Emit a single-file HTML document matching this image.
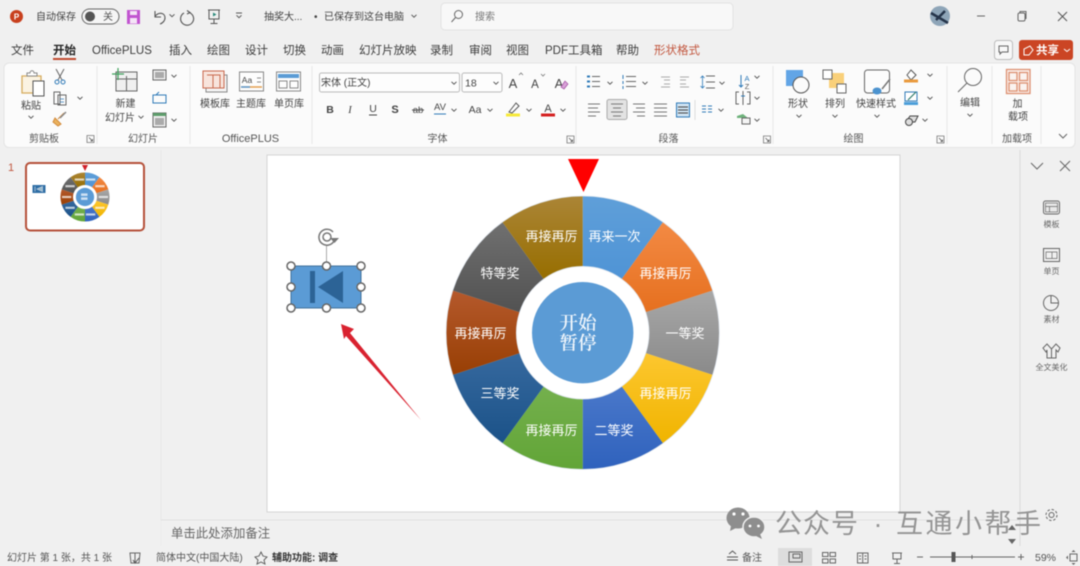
<!DOCTYPE html>
<html lang="zh"><head><meta charset="utf-8"><title>PowerPoint</title>
<style>
html,body{margin:0;padding:0;width:1080px;height:566px;overflow:hidden;background:#f0f0f0}
svg{display:block;filter:blur(.5px)}
text{font-family:"Liberation Sans","Noto Sans CJK SC",sans-serif;fill:#444;font-size:10px}
.m{text-anchor:middle}
.tab{font-size:11.5px;fill:#3c3c3c}
.g{font-size:10px;fill:#555}
.w{fill:#fff;font-size:13px;text-anchor:middle}
.ln{fill:none;stroke:#666;stroke-width:1}
.lb{fill:none;stroke:#2f7ab8;stroke-width:1}
.sf{fill:#f2f7fc;font-size:18.5px;font-weight:600;text-anchor:middle;font-family:"Noto Serif CJK SC",serif}
</style></head><body>
<svg width="1080" height="566" viewBox="0 0 1080 566" xmlns="http://www.w3.org/2000/svg">
<defs>
<path id="c" d="M-2.5,-1.2L0,1.2L2.5,-1.2" fill="none" stroke="#555" stroke-width="1"/>
<g id="l"><path d="M-3.5,-3.5H3.5V3.5H-3.5Z" fill="none" stroke="#777" stroke-width=".8"/><path d="M-1.5,-1.5L2,2M2,0V2H0" fill="none" stroke="#555" stroke-width=".8"/></g>
<linearGradient id="g1" x1="0" y1="0" x2="0" y2="1"><stop offset="0" stop-color="#5f9fd9"/><stop offset="1" stop-color="#4f94d6"/></linearGradient>
<linearGradient id="g2" x1="0" y1="0" x2="0" y2="1"><stop offset="0" stop-color="#f38a44"/><stop offset="1" stop-color="#e6701f"/></linearGradient>
<linearGradient id="g3" x1="0" y1="0" x2="0" y2="1"><stop offset="0" stop-color="#a8a8a8"/><stop offset="1" stop-color="#8a8a8a"/></linearGradient>
<linearGradient id="g4" x1="0" y1="0" x2="0" y2="1"><stop offset="0" stop-color="#fdc72f"/><stop offset="1" stop-color="#f0b400"/></linearGradient>
<linearGradient id="g5" x1="0" y1="0" x2="0" y2="1"><stop offset="0" stop-color="#4a78ca"/><stop offset="1" stop-color="#2f62bd"/></linearGradient>
<linearGradient id="g6" x1="0" y1="0" x2="0" y2="1"><stop offset="0" stop-color="#74b04d"/><stop offset="1" stop-color="#62a537"/></linearGradient>
<linearGradient id="g7" x1="0" y1="0" x2="0" y2="1"><stop offset="0" stop-color="#36699f"/><stop offset="1" stop-color="#1b5288"/></linearGradient>
<linearGradient id="g8" x1="0" y1="0" x2="0" y2="1"><stop offset="0" stop-color="#b5592c"/><stop offset="1" stop-color="#983f04"/></linearGradient>
<linearGradient id="g9" x1="0" y1="0" x2="0" y2="1"><stop offset="0" stop-color="#707070"/><stop offset="1" stop-color="#525252"/></linearGradient>
<linearGradient id="g10" x1="0" y1="0" x2="0" y2="1"><stop offset="0" stop-color="#ab8536"/><stop offset="1" stop-color="#976e00"/></linearGradient>
<g id="wheel">
<path fill="url(#g1)" d="M0,-136.3A136.3,136.3 0 0 1 80.1,-110.3L39.2,-54A66.7,66.7 0 0 0 0,-66.7Z"/>
<path fill="url(#g2)" d="M80.1,-110.3A136.3,136.3 0 0 1 129.6,-42.1L63.4,-20.6A66.7,66.7 0 0 0 39.2,-54Z"/>
<path fill="url(#g3)" d="M129.6,-42.1A136.3,136.3 0 0 1 129.6,42.1L63.4,20.6A66.7,66.7 0 0 0 63.4,-20.6Z"/>
<path fill="url(#g4)" d="M129.6,42.1A136.3,136.3 0 0 1 80.1,110.3L39.2,54A66.7,66.7 0 0 0 63.4,20.6Z"/>
<path fill="url(#g5)" d="M80.1,110.3A136.3,136.3 0 0 1 0,136.3L0,66.7A66.7,66.7 0 0 0 39.2,54Z"/>
<path fill="url(#g6)" d="M0,136.3A136.3,136.3 0 0 1 -80.1,110.3L-39.2,54A66.7,66.7 0 0 0 0,66.7Z"/>
<path fill="url(#g7)" d="M-80.1,110.3A136.3,136.3 0 0 1 -129.6,42.1L-63.4,20.6A66.7,66.7 0 0 0 -39.2,54Z"/>
<path fill="url(#g8)" d="M-129.6,42.1A136.3,136.3 0 0 1 -129.6,-42.1L-63.4,-20.6A66.7,66.7 0 0 0 -63.4,20.6Z"/>
<path fill="url(#g9)" d="M-129.6,-42.1A136.3,136.3 0 0 1 -80.1,-110.3L-39.2,-54A66.7,66.7 0 0 0 -63.4,-20.6Z"/>
<path fill="url(#g10)" d="M-80.1,-110.3A136.3,136.3 0 0 1 0,-136.3L0,-66.7A66.7,66.7 0 0 0 -39.2,-54Z"/>
<circle r="50.7" fill="#5b9bd5"/>
</g>
</defs>

<rect width="1080" height="566" fill="#f0f0f0"/>

<!-- title bar -->
<circle cx="16.5" cy="16.5" r="6.5" fill="#c8401e"/><text x="16.5" y="19.5" class="m" style="fill:#fff;font-size:8px;font-weight:700">P</text>
<text x="36" y="20">自动保存</text>
<rect x="82" y="9" width="37" height="15" rx="7.5" fill="#f6f6f6" stroke="#666"/><circle cx="90" cy="16.5" r="5" fill="#555"/><text x="108" y="20" class="m" style="fill:#555">关</text>
<path d="M127,10H140V24H127Z" fill="#c154d0"/><rect x="130" y="11" width="7" height="4" fill="#f4e4f6"/><rect x="130" y="18" width="7" height="5.5" fill="#f4e4f6"/>
<path d="M155,11V17H161M155,16.5C158,12 165,12 165,18C165,21 162,23.5 160,24" fill="none" stroke="#555" stroke-width="1.1"/><use href="#c" x="172" y="15.5"/>
<path d="M187,10.5L190,12.5L187,14M189,12.5A6.5,6.5 0 1 1 184,13" fill="none" stroke="#555" stroke-width="1.1"/>
<path d="M208,10H220M209,10V19H219V10M214,19V23M210.5,23.5H217.5" fill="none" stroke="#555"/><path d="M213,12.5L216.5,14.5L213,16.5Z" fill="#2b8a7b"/>
<path d="M236,13H242" stroke="#555" fill="none"/><use href="#c" x="239" y="16.5"/>
<text x="264" y="20">抽奖大...</text><text x="314" y="20">•</text><text x="324" y="20">已保存到这台电脑</text><use href="#c" x="414" y="16"/>
<rect x="441" y="3" width="292" height="27" rx="4" fill="#f8f8f8" stroke="#e2e2e2"/>
<circle cx="458.5" cy="14.5" r="4" class="ln"/><path d="M455.5,17.5L451.5,22" class="ln"/><text x="475" y="20" style="fill:#777">搜索</text>
<circle cx="940" cy="16" r="10" fill="#8ea5b8"/><path d="M931,13L943,20L948,23M936,20L945,11" stroke="#25344a" stroke-width="2.5" fill="none"/>
<path d="M977,16H985" stroke="#666" stroke-width="1"/><rect x="1018" y="13" width="7" height="8" rx="1.5" class="ln"/><path d="M1020,13V11.5H1026V18.5H1025" class="ln"/>
<path d="M1058,12L1067,21M1067,12L1058,21" stroke="#555" stroke-width="1" fill="none"/>

<!-- tabs -->
<text x="11" y="54" class="tab">文件</text>
<text x="53" y="54" class="tab" style="font-weight:700;fill:#222">开始</text><rect x="53" y="58" width="23" height="2" fill="#c0492d"/>
<text x="92" y="54" class="tab">OfficePLUS</text>
<text x="169" y="54" class="tab">插入</text><text x="207" y="54" class="tab">绘图</text><text x="245" y="54" class="tab">设计</text><text x="283" y="54" class="tab">切换</text><text x="321" y="54" class="tab">动画</text><text x="359" y="54" class="tab">幻灯片放映</text><text x="430" y="54" class="tab">录制</text><text x="469" y="54" class="tab">审阅</text><text x="506" y="54" class="tab">视图</text><text x="545" y="54" class="tab">PDF工具箱</text><text x="616" y="54" class="tab">帮助</text><text x="654" y="54" class="tab" style="fill:#c2573f">形状格式</text>
<rect x="994.5" y="40.5" width="18" height="19" rx="3" fill="#f8f8f8" stroke="#bbb"/><path d="M999,46H1008V52H1002L1000,54V52H999Z" class="ln"/>
<rect x="1019" y="40" width="54" height="20" rx="3" fill="#cb4524"/><path d="M1024,55V49L1030,46L1033,50L1029,55Z" fill="none" stroke="#fff"/><text x="1036" y="54" style="fill:#fff;font-size:11.5px;font-weight:700">共享</text><path d="M1064,49L1067,51.5L1070,49" fill="none" stroke="#fff"/>

<!-- ribbon -->
<rect x="4" y="63" width="1071" height="84.5" rx="5" fill="#fbfbfb" stroke="#e4e4e4"/>
<path d="M97,66V144M190,66V144M312,66V144M576,66V144M773,66V144M947,66V144M992,66V144M1041,66V144" stroke="#e9e9e9"/>

<!-- clipboard -->
<path d="M22,76H41V93H22Z" fill="#fbf3e2" stroke="#d6ac5e" stroke-width="1.3"/><path d="M27,76V73H30C30,70 34,70 34,73H37V76Z" fill="#fff" stroke="#888"/><rect x="33" y="81" width="11" height="15" fill="#fff" stroke="#555"/>
<text x="31" y="109" class="m">粘贴</text><use href="#c" x="31" y="117"/>
<path d="M56,69L62,80M64,69L58,80" stroke="#666" fill="none"/><circle cx="57" cy="82" r="2" fill="none" stroke="#2f7ab8"/><circle cx="63" cy="82" r="2" fill="none" stroke="#2f7ab8"/>
<path d="M54,92H60V104H54ZM58,95H66V105H58Z" fill="#fbfbfb" stroke="#666"/><path d="M60,99H64M60,102H64" stroke="#2f7ab8" stroke-width=".8"/><use href="#c" x="80" y="98"/>
<path d="M64,113L58,119M55,118L61,124L58,126L53,122Z" stroke="#d28a3a" fill="#eab25f"/><path d="M66,112L60,118" stroke="#888" stroke-width="1.5"/>
<text x="44" y="142" class="m g">剪贴板</text><use href="#l" x="90.5" y="139"/>

<!-- slides -->
<rect x="116" y="72" width="21" height="19" fill="#f0f0f0" stroke="#666"/><path d="M126.5,76V91M116,79H137" stroke="#666"/><path d="M118,68V80M112,74H124" stroke="#3fa05c" stroke-width="1.2"/>
<text x="125.5" y="107" class="m">新建</text><text x="120" y="121" class="m">幻灯片</text><use href="#c" x="141" y="117"/>
<rect x="153" y="70" width="13" height="10" fill="#eee" stroke="#666"/><rect x="155" y="72" width="9" height="6" fill="#aaa"/><use href="#c" x="174" y="76"/>
<path d="M153,95H166V103H153ZM156,95L159,92" class="lb"/>
<rect x="153" y="113" width="13" height="14" fill="#eee" stroke="#666"/><rect x="153" y="113" width="13" height="3" fill="#5d9d6b"/><rect x="155" y="118" width="9" height="7" fill="#aaa"/><use href="#c" x="174" y="120"/>
<text x="143" y="142" class="m g">幻灯片</text>

<!-- officeplus -->
<rect x="206" y="75" width="21" height="17" fill="#f4f4f4" stroke="#888"/><rect x="203" y="71" width="21" height="17" fill="#f8e4dc" stroke="#c9684d"/><path d="M207,75H220V88M213,75V88" stroke="#c9684d" fill="none"/>
<text x="215" y="107" class="m">模板库</text>
<rect x="239.5" y="72" width="24" height="19" fill="#fdfdfd" stroke="#888"/><text x="247" y="83" class="m" style="font-size:8.5px">Aa</text><path d="M257,78H261M257,82H261" stroke="#888"/><path d="M241,87H262" stroke="#e4a04e" stroke-width="1.5"/><path d="M241,87H250" stroke="#5b9bd5" stroke-width="1.5"/>
<text x="251" y="107" class="m">主题库</text>
<rect x="276.5" y="72" width="24" height="19" fill="#fdfdfd" stroke="#888"/><rect x="278" y="74" width="21" height="4" fill="#5b9bd5"/><path d="M279,81H287V88H279ZM290,81H298V88H290Z" stroke="#888" fill="none"/>
<text x="289" y="107" class="m">单页库</text>
<text x="250.5" y="142" class="m g" style="font-size:11px">OfficePLUS</text>

<!-- font -->
<rect x="319.5" y="73" width="140" height="19" rx="2" fill="#fdfdfd" stroke="#bbb"/><text x="321" y="86">宋体 (正文)</text><use href="#c" x="454" y="83"/>
<rect x="462" y="73" width="40" height="19" rx="2" fill="#fdfdfd" stroke="#bbb"/><text x="465" y="86.5" style="font-size:10.5px">18</text><use href="#c" x="496" y="83"/>
<text x="513" y="88" class="m" style="font-size:13px">A</text><path d="M519,75L521,73L523,75" fill="none" stroke="#777" stroke-width=".8"/>
<text x="535" y="88" class="m" style="font-size:11.5px">A</text><path d="M541,74L543,76L545,74" fill="none" stroke="#777" stroke-width=".8"/>
<text x="559" y="88" class="m" style="font-size:13px">A</text><path d="M561,87L565,81L568,84L564,89Z" fill="#d9a0d8" stroke="#a050a0" stroke-width=".7"/>
<text x="330" y="113" class="m" style="font-weight:700;font-size:10.5px">B</text>
<text x="350" y="113" class="m" style="font-style:italic;font-family:'Liberation Serif',serif;font-size:11px">I</text>
<text x="373" y="112" class="m" style="font-size:10.5px">U</text><path d="M369,115H377" stroke="#444"/>
<text x="395" y="113" class="m" style="font-size:11px;font-weight:700">S</text>
<text x="418" y="113" class="m" style="font-size:9.5px">ab</text><path d="M412,110H424" stroke="#555"/>
<text x="440" y="110" class="m" style="font-size:9.5px">AV</text><path d="M434,114H446" stroke="#2f7ab8"/><use href="#c" x="454" y="110"/>
<text x="475" y="113" class="m" style="font-size:10.5px">Aa</text><use href="#c" x="490" y="110"/>
<path d="M509,112L516,103L519,106L512,113Z" fill="#fdfdfd" stroke="#555"/><rect x="506" y="113.5" width="14" height="3" fill="#f7ea3a"/><use href="#c" x="529" y="110"/>
<text x="548" y="112" class="m" style="font-size:11px">A</text><rect x="541" y="113.5" width="14" height="3" fill="#d42020"/><use href="#c" x="563" y="110"/>
<text x="437.5" y="142" class="m g">字体</text><use href="#l" x="570.5" y="139.5"/>

<!-- paragraph -->
<g fill="none" stroke="#666">
<path d="M592,76.5H600M592,81.5H600M592,86.5H600M626,76.5H636M626,81.5H636M626,86.5H636"/>
<path d="M661,77H670M664,80H670M664,84H670M661,87H670" stroke="#aaa"/>
<path d="M680,77H689M680,80H686M680,84H686M680,87H689" stroke="#aaa"/>
<path d="M706,76H715M706,82H715M706,88H715"/>
</g>
<path d="M587,75.500H590V77.500H587ZM587,80.500H590V82.500H587ZM587,85.500H590V87.500H587Z" fill="#2f7ab8"/>
<path d="M623,75V79M623,81V84M623,86V89" stroke="#2f7ab8"/><path d="M702.5,76V88M700.5,78L702.5,76L704.5,78M700.5,86L702.5,88L704.5,86" fill="none" stroke="#2f7ab8" stroke-width=".8"/>
<use href="#c" x="610" y="83"/><use href="#c" x="645" y="83"/><use href="#c" x="722" y="83"/>
<rect x="607" y="99.500" width="20" height="20" rx="2" fill="#e3e3e3" stroke="#aaa"/>
<g fill="none" stroke="#777">
<path d="M588,104H600M588,108H598M588,112H600M588,116H596"/>
<path d="M611,104H623M613,108H621M611,112H623M613,116H621"/>
<path d="M633,104H645M636,108H645M633,112H645M637,116H645"/>
<path d="M654,104H667M654,108H667M654,112H667M654,116H667"/>
</g>
<rect x="676.5" y="103" width="13" height="14" fill="#cfe3f2" stroke="#2f7ab8"/><path d="M678,107H688M678,110H688M678,113H688" stroke="#444"/>
<path d="M695,100V120" stroke="#ddd"/>
<path d="M702,106H706M702,109H706M702,112H706M708,106H712M708,109H712M708,112H712" stroke="#2f7ab8"/><use href="#c" x="721" y="110"/>
<path d="M741,75V87M739,85L741,87L743,85" stroke="#2f7ab8" fill="none"/><text x="747" y="81" class="m" style="font-size:7.5px;fill:#2f7ab8">A</text><text x="747" y="89" class="m" style="font-size:7.5px;fill:#555">Z</text><use href="#c" x="757" y="77"/>
<path d="M739,92H736V104H739M747,92H750V104H747M743,91V105" fill="none" stroke="#666"/><path d="M741,96H745" stroke="#2f7ab8"/><use href="#c" x="757" y="98"/>
<path d="M737,116L743,114L748,118H737Z" fill="#6db27a"/><rect x="742" y="118" width="8" height="6" fill="#f4f4f4" stroke="#666"/><use href="#c" x="757" y="120"/>
<text x="668.5" y="142" class="m g">段落</text><use href="#l" x="767" y="139.5"/>

<!-- drawing -->
<rect x="786" y="70" width="17" height="16" fill="#62a5e6"/><circle cx="801" cy="85" r="8" fill="#fbfbfb" stroke="#555"/>
<text x="798" y="107" class="m">形状</text><use href="#c" x="799" y="116"/>
<rect x="829" y="73" width="15" height="15" fill="#f9d07a" /><rect x="823" y="70" width="9" height="9" fill="#fff" stroke="#666"/><rect x="837" y="84" width="9" height="9" fill="#fff" stroke="#666"/>
<text x="835" y="107" class="m">排列</text><use href="#c" x="835" y="116"/>
<rect x="864.5" y="70" width="25" height="23" rx="3" fill="#fcfcfc" stroke="#666"/><path d="M890,79L882,89" stroke="#777" stroke-width="1.5"/><ellipse cx="877" cy="91" rx="4.5" ry="3.5" fill="#4c93cf"/>
<text x="876" y="107" class="m">快速样式</text><use href="#c" x="877" y="116"/>
<path d="M907,75L911,70L916,75L911,80Z" fill="#fff" stroke="#555"/><rect x="904" y="79.5" width="14" height="3" fill="#ea9a3d"/><use href="#c" x="930" y="75"/>
<rect x="905" y="92" width="12" height="9" fill="#fff" stroke="#2f7ab8"/><path d="M908,100L916,92" stroke="#2f7a6a" stroke-width="1.2"/><rect x="904" y="102" width="14" height="3" fill="#4c9ed9"/><use href="#c" x="930" y="98"/>
<path d="M906,122L910,116H918L915,122Z" fill="#ddd" stroke="#444"/><circle cx="909" cy="122" r="3.5" fill="#ddd" stroke="#444"/><use href="#c" x="925" y="120"/>
<text x="853.5" y="142" class="m g">绘图</text><use href="#l" x="940.5" y="139.5"/>

<!-- editing -->
<circle cx="973" cy="77" r="8.5" fill="none" stroke="#666"/><path d="M967,83L958,92" stroke="#666"/>
<text x="970" y="106" class="m">编辑</text><use href="#c" x="970" y="115"/>

<!-- add-in -->
<g fill="#fbf3ef" stroke="#dd8f70" stroke-width="1.3"><rect x="1006.5" y="69.5" width="23.5" height="24"/><rect x="1009" y="72.5" width="8" height="8"/><rect x="1019.5" y="72.5" width="8" height="8"/><rect x="1009" y="83" width="8" height="8"/><rect x="1019.5" y="83" width="8" height="8"/></g>
<text x="1017.5" y="107" class="m">加</text><text x="1018" y="120" class="m">载项</text>
<text x="1017" y="142" class="m g">加载项</text>
<path d="M1059,134L1063,138L1067,134" fill="none" stroke="#666"/>

<!-- thumbnail pane -->
<path d="M161,150V546" stroke="#e8e8e8" stroke-width="1"/>
<text x="8" y="171" style="fill:#c0573f;font-size:11px">1</text>
<rect x="26" y="163" width="118" height="67.5" rx="4" fill="#fff" stroke="#b5513a" stroke-width="2"/>
<rect x="32.5" y="185" width="13" height="8" fill="#2f6ea5"/><path d="M35,186.5V191.5M42.5,186.5V191.5L37,189Z" stroke="#bcd" fill="#9bc" stroke-width=".8"/>
<g transform="translate(85,197) scale(.18)"><use href="#wheel"/>
<g fill="#fff" fill-opacity=".7"><rect x="5" y="-103" width="52" height="12"/><rect x="57" y="-66" width="52" height="12"/><rect x="76" y="-6" width="52" height="12"/><rect x="57" y="54" width="52" height="12"/><rect x="5" y="91" width="52" height="12"/><rect x="-57" y="91" width="52" height="12"/><rect x="-109" y="54" width="52" height="12"/><rect x="-128" y="-6" width="52" height="12"/><rect x="-109" y="-66" width="52" height="12"/><rect x="-57" y="-103" width="52" height="12"/><rect x="-22" y="-20" width="36" height="14"/><rect x="-22" y="2" width="36" height="14"/></g></g>
<path d="M82,165H88L85,171Z" fill="#d0202a"/>

<!-- slide -->
<rect x="267" y="155" width="633" height="357" fill="#fff" stroke="#d4d4d4"/>
<path d="M568,159H599L583.5,192Z" fill="#ff0000"/>
<g transform="translate(582.7,332.7)"><circle r="137" fill="#dfe6ee"/><circle r="66" fill="#fff"/><use href="#wheel"/></g>
<text x="614.5" y="241" class="w">再来一次</text><text x="665.5" y="278" class="w">再接再厉</text><text x="685" y="338" class="w">一等奖</text><text x="665.5" y="398" class="w">再接再厉</text><text x="614" y="435" class="w">二等奖</text><text x="551.5" y="435" class="w">再接再厉</text><text x="500" y="398" class="w">三等奖</text><text x="480.5" y="338" class="w">再接再厉</text><text x="500" y="278" class="w">特等奖</text><text x="551.5" y="241" class="w">再接再厉</text>
<text x="578" y="329.5" class="sf">开始</text>
<text x="578" y="349.5" class="sf">暂停</text>

<!-- selected shape -->
<path d="M326.5,245V266" stroke="#aaa"/>
<rect x="291" y="266" width="70" height="42" fill="#5b9bd5" stroke="#41719c"/>
<rect x="310" y="271" width="5" height="32" fill="#2c6396"/><path d="M318,287L343,271V303Z" fill="#2c6396"/>
<g fill="#fff" stroke="#666" stroke-width="1.5"><circle cx="291" cy="266" r="4"/><circle cx="326.5" cy="266" r="4"/><circle cx="361" cy="266" r="4"/><circle cx="291" cy="287" r="4"/><circle cx="361" cy="287" r="4"/><circle cx="291" cy="308" r="4"/><circle cx="326.5" cy="308" r="4"/><circle cx="361" cy="308" r="4"/></g>
<g fill="none" stroke="#777" stroke-width="1.5"><path d="M334,241A8,8 0 1 1 333,232"/><circle cx="327" cy="237" r="4"/></g><path d="M330,238H339L334.5,243Z" fill="#777"/>
<path d="M341,324L354,329L350,333L421,420L346,336L344,339Z" fill="#d92230"/>

<!-- notes -->
<rect x="161" y="520" width="859" height="26.5" fill="#f0f0f0"/><path d="M161,520H1020" stroke="#e0e0e0"/>
<text x="171" y="537.5" style="font-size:12.4px;fill:#666">单击此处添加备注</text>

<!-- right panel -->
<path d="M1020,150V546" stroke="#dcdcdc"/>
<path d="M1031,163L1037,169L1043,163M1060,161L1070,171M1070,161L1060,171" fill="none" stroke="#666"/>
<rect x="1043.5" y="201" width="16" height="13" rx="2" fill="none" stroke="#666"/><rect x="1045.5" y="203" width="12" height="9" fill="#e8e8e8" stroke="#666" stroke-width=".7"/><path d="M1045.5,206.5H1057.5M1049.5,206.5V212" stroke="#666" stroke-width=".7"/>
<text x="1051.5" y="227" class="m" style="font-size:8px;fill:#666">模板</text>
<rect x="1043.5" y="248.5" width="16" height="13" fill="none" stroke="#666"/><path d="M1046,252H1057V258.5H1046ZM1052,252V258.5" fill="none" stroke="#666" stroke-width=".7"/>
<text x="1051.5" y="274" class="m" style="font-size:8px;fill:#666">单页</text>
<circle cx="1051" cy="303" r="7.5" class="ln"/><path d="M1051,295.5V303H1058.5" class="ln"/>
<text x="1051.5" y="322" class="m" style="font-size:8px;fill:#666">素材</text>
<path d="M1047,344L1043,348L1046,352L1047,350V358H1056V350L1058,352L1060,348L1056,344L1051.5,349ZM1051.5,349V358" class="ln"/>
<text x="1051.5" y="370" class="m" style="font-size:8px;fill:#666">全文美化</text>

<!-- watermark -->
<ellipse cx="738" cy="518" rx="11.5" ry="10.5" fill="#8e8e8e"/><path d="M731,526L730,531L736,528Z" fill="#8e8e8e"/>
<circle cx="734" cy="514" r="1.6" fill="#fff"/><circle cx="743" cy="514" r="1.6" fill="#fff"/>
<ellipse cx="754" cy="527" rx="11" ry="10" fill="#8e8e8e" stroke="#f0f0f0" stroke-width="1.5"/><path d="M760,534L762,539L756,536Z" fill="#8e8e8e"/>
<circle cx="750" cy="526" r="1.4" fill="#fff"/><circle cx="758.5" cy="526" r="1.4" fill="#fff"/>
<text x="775" y="533" style="font-size:27px;letter-spacing:1px;fill:#949494">公众号</text><text x="878" y="533" class="m" style="font-size:27px;fill:#949494">·</text>
<text x="896" y="533" style="font-size:27px;letter-spacing:2.5px;fill:#949494">互通小帮手</text>
<g fill="none" stroke="#666"><circle cx="1051.5" cy="515" r="2.5"/><circle cx="1051.5" cy="515" r="5.5" stroke-dasharray="2.5 1.8"/></g>
<path d="M1012,525L1016,530H1008Z" fill="#666"/><path d="M1008,539H1016L1012,544Z" fill="#666"/>

<!-- status -->
<text x="7" y="561" style="fill:#555">幻灯片 第 1 张，共 1 张</text>
<path d="M130,553H135V563H131ZM135,553H140L139,563H135" class="ln"/><path d="M133,560L135,563L139,558" fill="none" stroke="#555"/>
<text x="156" y="561" style="fill:#555">简体中文(中国大陆)</text>
<path d="M261,552L263,556L267,557L264,560L265,564L261,562L257,564L258,560L255,557L259,556Z" fill="none" stroke="#555" stroke-width=".9"/>
<text x="272" y="561" style="font-weight:700;fill:#333">辅助功能: 调查</text>
<path d="M727,557H738M727,560H738M729,554L732.5,551L736,554" fill="none" stroke="#555"/><text x="742" y="561" style="fill:#555">备注</text>
<rect x="778" y="548" width="34" height="18" fill="#dddddd"/>
<rect x="789" y="552" width="13" height="10" class="ln"/><rect x="793" y="554" width="7" height="4" class="ln"/>
<path d="M822.5,552.5H828V556.5H822.5ZM830,552.5H835.5V556.5H830ZM822.5,559H828V563H822.5ZM830,559H835.5V563H830Z" class="ln"/>
<path d="M857.5,553H868V563H857.5ZM862.7,553V563M859,556H861M859,559H861M864.5,556H866.5M864.5,559H866.5" class="ln"/>
<path d="M892,553H902M893,553V559H901V553M897,559V563M894,563.5H900" class="ln"/>
<path d="M917,557H923M930,557H1015M1018,557H1024M1021,554V560" stroke="#666" fill="none"/>
<rect x="951.5" y="552" width="4" height="10" fill="#555"/><path d="M972,555V559" stroke="#666"/>
<text x="1035" y="561" style="font-size:10.5px;fill:#555">59%</text>
<rect x="1070" y="554" width="7" height="7" class="ln"/><path d="M1073.5,550L1071.5,552H1075.5ZM1073.5,565L1071.5,563H1075.5ZM1066,557.5L1068,555.5V559.5Z" fill="#666"/>
</svg>
</body></html>
